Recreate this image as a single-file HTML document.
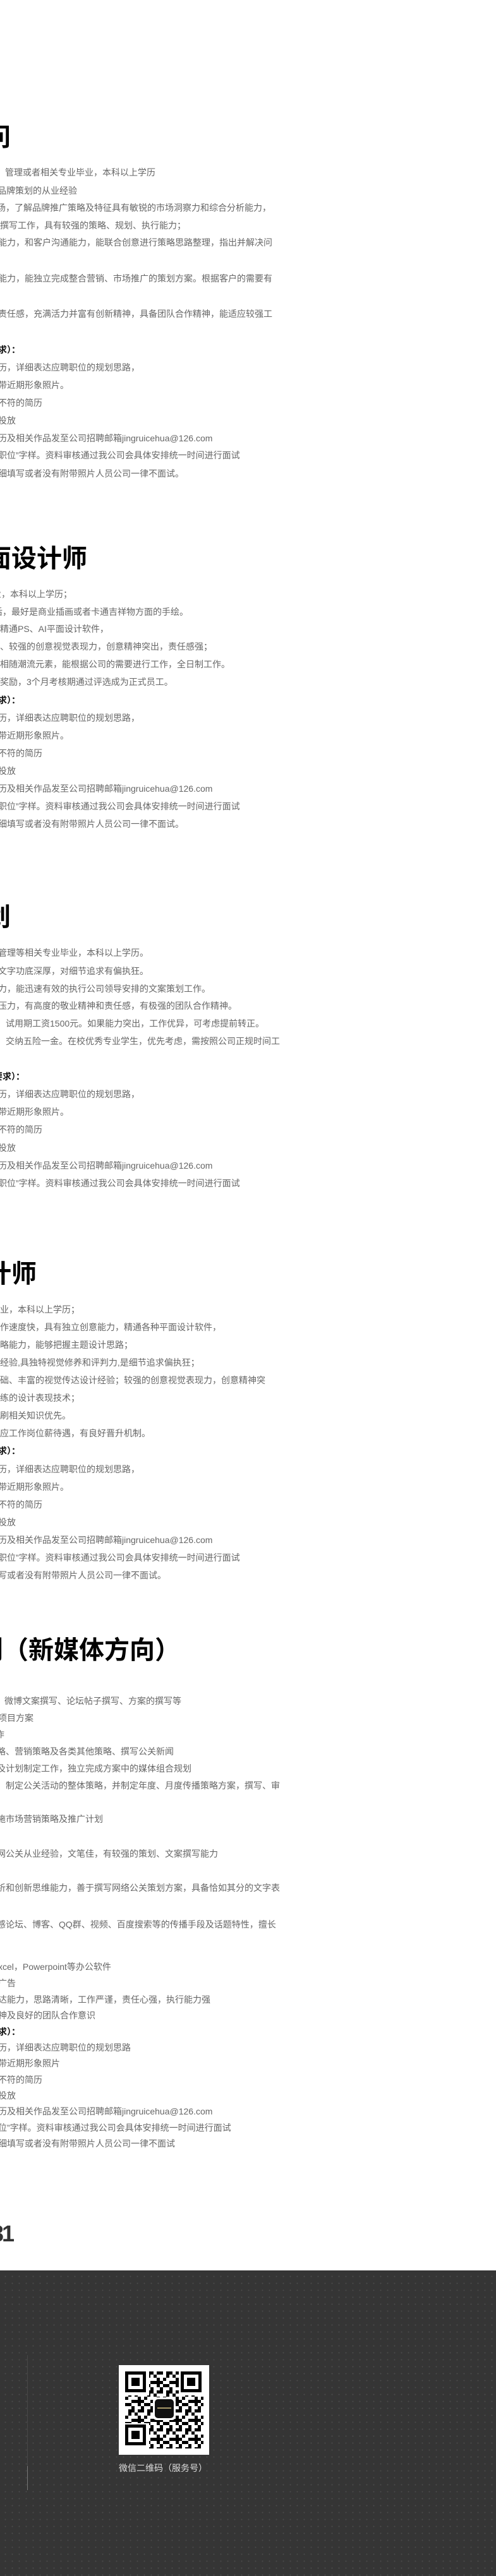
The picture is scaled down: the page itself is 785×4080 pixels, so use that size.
<!DOCTYPE html>
<html><head><meta charset="utf-8">
<style>
html,body{margin:0;padding:0;background:#fff;}
body{width:785px;height:4080px;position:relative;overflow:hidden;font-family:"Liberation Sans","Noto Sans CJK SC",sans-serif;}
.l{position:absolute;white-space:nowrap;font-size:14px;line-height:20px;color:#666;}
.b{color:#111;font-weight:bold;}
.h{position:absolute;white-space:nowrap;font-size:40px;line-height:48px;font-weight:bold;color:#000;}
.foot{position:absolute;left:0;top:3596px;width:785px;height:484px;background-color:#353535;
background-image:radial-gradient(circle,#4a4a4a 0.8px,transparent 1.2px);background-size:11px 11px;background-position:3px 4px;}
</style></head><body>

<div class="h" style="left:-23px;top:194px">问</div>
<div class="l" style="left:8px;top:263px">管理或者相关专业毕业，本科以上学历</div>
<div class="l" style="left:-4px;top:292px">品牌策划的从业经验</div>
<div class="l" style="left:-5px;top:319px">场，了解品牌推广策略及特征具有敏锐的市场洞察力和综合分析能力，</div>
<div class="l" style="left:0px;top:347px">撰写工作，具有较强的策略、规划、执行能力；</div>
<div class="l" style="left:-3px;top:374px">能力，和客户沟通能力，能联合创意进行策略思路整理，指出并解决问</div>
<div class="l" style="left:-3px;top:431px">能力，能独立完成整合营销、市场推广的策划方案。根据客户的需要有</div>
<div class="l" style="left:-3px;top:487px">责任感，充满活力并富有创新精神，具备团队合作精神，能适应较强工</div>
<div class="l b" style="left:-3px;top:544px">求）：</div>
<div class="l" style="left:-3px;top:572px">历，详细表达应聘职位的规划思路，</div>
<div class="l" style="left:-3px;top:600px">带近期形象照片。</div>
<div class="l" style="left:-3px;top:628px">不符的简历</div>
<div class="l" style="left:-3px;top:656px">投放</div>
<div class="l" style="left:-3px;top:684px">历及相关作品发至公司招聘邮箱jingruicehua@126.com</div>
<div class="l" style="left:-3px;top:711px">职位”字样。资料审核通过我公司会具体安排统一时间进行面试</div>
<div class="l" style="left:-3px;top:740px">细填写或者没有附带照片人员公司一律不面试。</div>

<div class="h" style="left:-22px;top:861px">面设计师</div>
<div class="l" style="left:-12px;top:931px">业，本科以上学历；</div>
<div class="l" style="left:-10px;top:959px">后，最好是商业插画或者卡通吉祥物方面的手绘。</div>
<div class="l" style="left:0px;top:986px">精通PS、AI平面设计软件，</div>
<div class="l" style="left:0px;top:1014px">、较强的创意视觉表现力，创意精神突出，责任感强；</div>
<div class="l" style="left:0px;top:1042px">相随潮流元素，能根据公司的需要进行工作，全日制工作。</div>
<div class="l" style="left:0px;top:1070px">奖励，3个月考核期通过评选成为正式员工。</div>
<div class="l b" style="left:-3px;top:1099px">求）：</div>
<div class="l" style="left:-3px;top:1127px">历，详细表达应聘职位的规划思路，</div>
<div class="l" style="left:-3px;top:1155px">带近期形象照片。</div>
<div class="l" style="left:-3px;top:1183px">不符的简历</div>
<div class="l" style="left:-3px;top:1211px">投放</div>
<div class="l" style="left:-3px;top:1239px">历及相关作品发至公司招聘邮箱jingruicehua@126.com</div>
<div class="l" style="left:-3px;top:1267px">职位”字样。资料审核通过我公司会具体安排统一时间进行面试</div>
<div class="l" style="left:-3px;top:1295px">细填写或者没有附带照片人员公司一律不面试。</div>

<div class="h" style="left:-23px;top:1429px">划</div>
<div class="l" style="left:-3px;top:1499px">管理等相关专业毕业，本科以上学历。</div>
<div class="l" style="left:-3px;top:1528px">文字功底深厚，对细节追求有偏执狂。</div>
<div class="l" style="left:-3px;top:1556px">力，能迅速有效的执行公司领导安排的文案策划工作。</div>
<div class="l" style="left:-3px;top:1583px">压力，有高度的敬业精神和责任感，有极强的团队合作精神。</div>
<div class="l" style="left:-5px;top:1611px">，试用期工资1500元。如果能力突出，工作优异，可考虑提前转正。</div>
<div class="l" style="left:-5px;top:1639px">，交纳五险一金。在校优秀专业学生，优先考虑，需按照公司正规时间工</div>
<div class="l b" style="left:-10px;top:1695px">要求）：</div>
<div class="l" style="left:-3px;top:1723px">历，详细表达应聘职位的规划思路，</div>
<div class="l" style="left:-3px;top:1751px">带近期形象照片。</div>
<div class="l" style="left:-3px;top:1779px">不符的简历</div>
<div class="l" style="left:-3px;top:1808px">投放</div>
<div class="l" style="left:-3px;top:1836px">历及相关作品发至公司招聘邮箱jingruicehua@126.com</div>
<div class="l" style="left:-3px;top:1864px">职位”字样。资料审核通过我公司会具体安排统一时间进行面试</div>

<div class="h" style="left:-22px;top:1994px">计师</div>
<div class="l" style="left:0px;top:2064px">业，本科以上学历；</div>
<div class="l" style="left:0px;top:2092px">作速度快，具有独立创意能力，精通各种平面设计软件，</div>
<div class="l" style="left:0px;top:2120px">略能力，能够把握主题设计思路；</div>
<div class="l" style="left:0px;top:2148px">经验,具独特视觉修养和评判力,是细节追求偏执狂；</div>
<div class="l" style="left:0px;top:2176px">础、丰富的视觉传达设计经验；较强的创意视觉表现力，创意精神突</div>
<div class="l" style="left:0px;top:2204px">练的设计表现技术；</div>
<div class="l" style="left:0px;top:2232px">刷相关知识优先。</div>
<div class="l" style="left:0px;top:2260px">应工作岗位薪待遇，有良好晋升机制。</div>
<div class="l b" style="left:-3px;top:2288px">求）：</div>
<div class="l" style="left:-3px;top:2317px">历，详细表达应聘职位的规划思路，</div>
<div class="l" style="left:-3px;top:2345px">带近期形象照片。</div>
<div class="l" style="left:-3px;top:2373px">不符的简历</div>
<div class="l" style="left:-3px;top:2401px">投放</div>
<div class="l" style="left:-3px;top:2429px">历及相关作品发至公司招聘邮箱jingruicehua@126.com</div>
<div class="l" style="left:-3px;top:2457px">职位”字样。资料审核通过我公司会具体安排统一时间进行面试</div>
<div class="l" style="left:-3px;top:2485px">写或者没有附带照片人员公司一律不面试。</div>

<div class="h" style="left:-35px;top:2590px">划（新媒体方向）</div>
<div class="l" style="left:7px;top:2684px">微博文案撰写、论坛帖子撰写、方案的撰写等</div>
<div class="l" style="left:-3px;top:2711px">项目方案</div>
<div class="l" style="left:-7px;top:2737px">作</div>
<div class="l" style="left:-5px;top:2764px">略、营销策略及各类其他策略、撰写公关新闻</div>
<div class="l" style="left:-5px;top:2791px">及计划制定工作，独立完成方案中的媒体组合规划</div>
<div class="l" style="left:-5px;top:2818px">，制定公关活动的整体策略，并制定年度、月度传播策略方案，撰写、审</div>
<div class="l" style="left:-5px;top:2871px">施市场营销策略及推广计划</div>
<div class="l" style="left:-5px;top:2926px">网公关从业经验，文笔佳，有较强的策划、文案撰写能力</div>
<div class="l" style="left:-5px;top:2980px">析和创新思维能力，善于撰写网络公关策划方案，具备恰如其分的文字表</div>
<div class="l" style="left:-5px;top:3038px">感论坛、博客、QQ群、视频、百度搜索等的传播手段及话题特性，擅长</div>
<div class="l" style="left:-3px;top:3105px">xcel，Powerpoint等办公软件</div>
<div class="l" style="left:-3px;top:3131px">广告</div>
<div class="l" style="left:-3px;top:3157px">达能力，思路清晰，工作严谨，责任心强，执行能力强</div>
<div class="l" style="left:-3px;top:3182px">神及良好的团队合作意识</div>
<div class="l b" style="left:-3px;top:3208px">求）：</div>
<div class="l" style="left:-3px;top:3233px">历，详细表达应聘职位的规划思路</div>
<div class="l" style="left:-3px;top:3258px">带近期形象照片</div>
<div class="l" style="left:-3px;top:3284px">不符的简历</div>
<div class="l" style="left:-3px;top:3309px">投放</div>
<div class="l" style="left:-3px;top:3334px">历及相关作品发至公司招聘邮箱jingruicehua@126.com</div>
<div class="l" style="left:-3px;top:3360px">位”字样。资料审核通过我公司会具体安排统一时间进行面试</div>
<div class="l" style="left:-3px;top:3385px">细填写或者没有附带照片人员公司一律不面试</div>

<div class="h" style="left:-14px;top:3514px;color:#333;font-size:36px;letter-spacing:-3px">31</div>

<div class="foot"></div>
<div style="position:absolute;left:43px;top:3731px;width:0;height:175px;border-left:1px dotted #5a5a5a"></div>
<div style="position:absolute;left:43px;top:3906px;width:1px;height:38px;background:#777"></div>

<svg style="position:absolute;left:188px;top:3746px" width="143" height="142" viewBox="0 0 143 142">
<defs>
<pattern id="qp" x="0" y="0" width="30" height="30" patternUnits="userSpaceOnUse">
<rect x="0" y="0" width="5" height="5" fill="#000"/><rect x="10" y="0" width="10" height="5" fill="#000"/>
<rect x="5" y="5" width="5" height="5" fill="#000"/><rect x="20" y="5" width="5" height="10" fill="#000"/>
<rect x="0" y="10" width="10" height="5" fill="#000"/><rect x="15" y="15" width="5" height="5" fill="#000"/>
<rect x="25" y="15" width="5" height="5" fill="#000"/><rect x="0" y="20" width="5" height="10" fill="#000"/>
<rect x="10" y="20" width="5" height="5" fill="#000"/><rect x="20" y="25" width="10" height="5" fill="#000"/>
<rect x="5" y="25" width="5" height="5" fill="#000"/><rect x="15" y="10" width="5" height="5" fill="#000"/>
</pattern>
</defs>
<rect width="143" height="142" fill="#fff"/>
<rect x="10" y="10" width="124" height="122" fill="url(#qp)"/>
<g fill="#fff"><rect x="8" y="8" width="40" height="40"/><rect x="95" y="8" width="40" height="40"/><rect x="8" y="92" width="40" height="40"/></g>
<g fill="none" stroke="#000" stroke-width="5">
<rect x="12.5" y="12.5" width="28" height="28"/><rect x="100.5" y="12.5" width="28" height="28"/><rect x="12.5" y="96.5" width="28" height="28"/></g>
<g fill="#000"><rect x="20" y="20" width="13" height="13"/><rect x="108" y="20" width="13" height="13"/><rect x="20" y="104" width="13" height="13"/></g>
<rect x="54" y="51" width="36" height="36" rx="6" fill="#fff"/>
<rect x="57" y="54" width="30" height="30" rx="5" fill="#111"/>
<rect x="61" y="67" width="22" height="2" fill="#a89a6a"/>
</svg>
<div style="position:absolute;left:188px;top:3899px;font-size:14px;line-height:20px;color:#ddd;white-space:nowrap">微信二维码（服务号）</div>

</body></html>
